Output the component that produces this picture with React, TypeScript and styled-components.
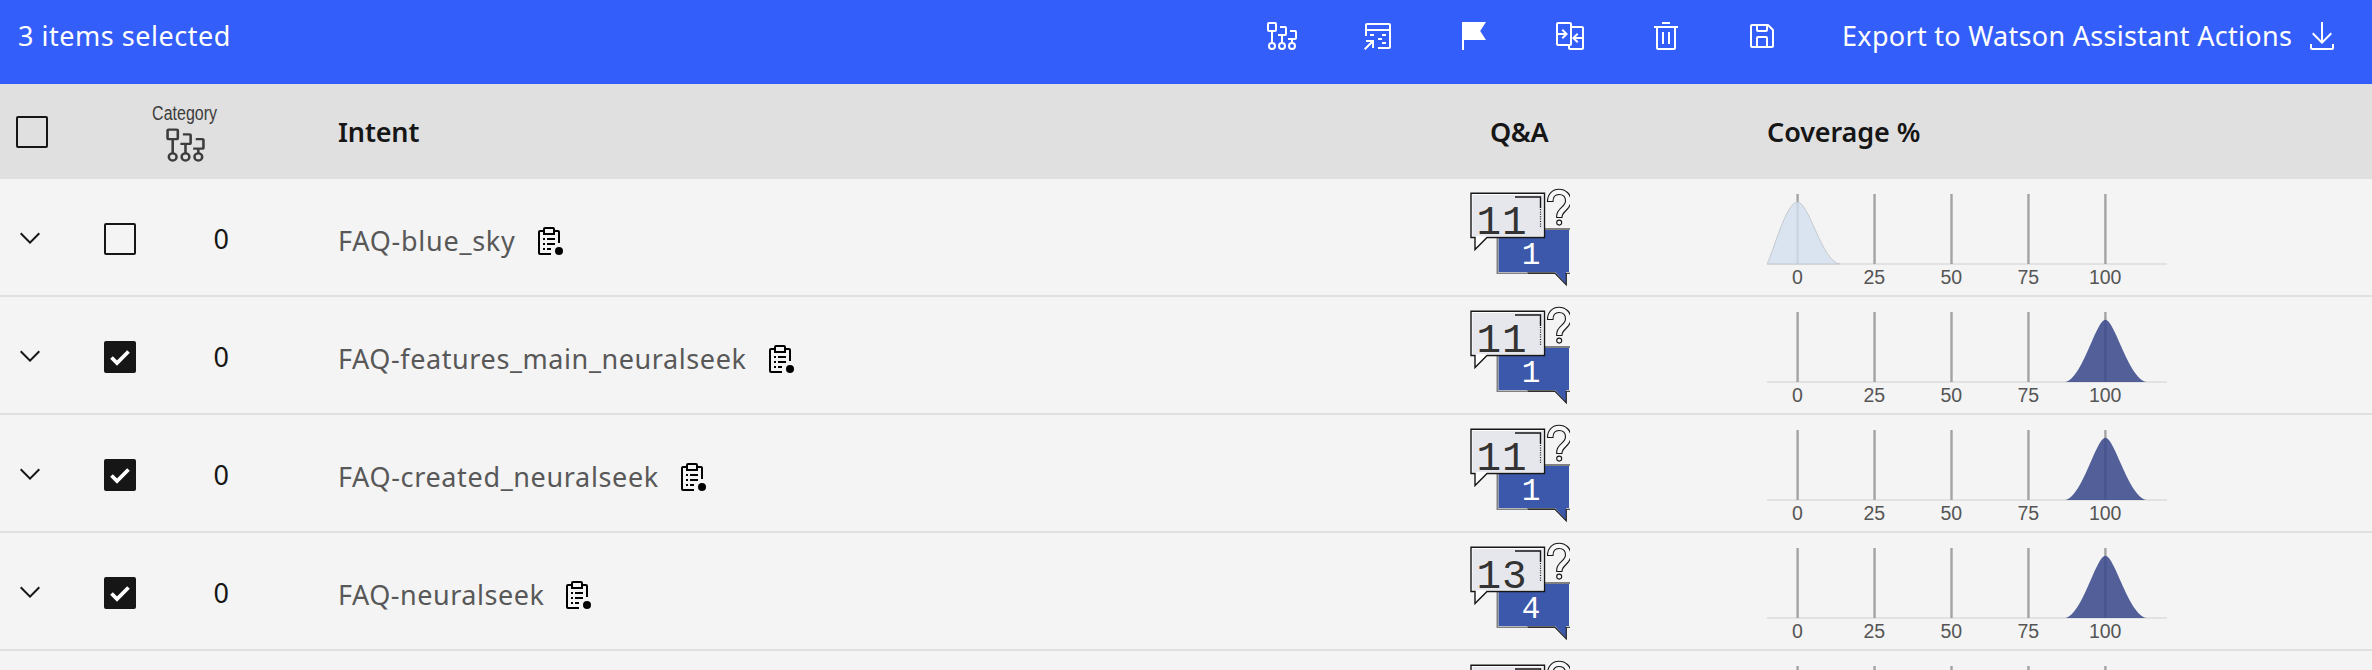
import React from 'react';
import styled, { createGlobalStyle } from 'styled-components';

const Global = createGlobalStyle`
  *{box-sizing:border-box}
  body{margin:0;background:#f4f4f4;overflow:hidden}
`;

const Page = styled.div`
  width:2372px;height:670px;overflow:hidden;background:#f4f4f4;color:#161616;
  font:400 28px/36px "Noto Sans",sans-serif;
`;
const Toolbar = styled.header`
  height:84px;padding:20px 34px 0 18px;display:flex;align-items:flex-start;background:#345efa;color:#fff;
`;
const Label = styled.span<{ $spacing?: number }>`
  white-space:nowrap;line-height:32px;font-size:27px;letter-spacing:${p => p.$spacing ?? 0}px;
`;
const Actions = styled.div`
  display:flex;gap:64px;margin-left:auto;margin-right:64px;
`;
const ExportAction = styled.div`
  width:496px;display:flex;justify-content:space-between;
`;
const Icon = styled.svg`
  width:32px;height:32px;flex:none;display:block;fill:currentColor;
`;
const Lines = styled.g`
  fill:none;stroke:currentColor;stroke-width:2;
`;
const columns = '104px 234px 1132px 297px 1fr';
const HeaderRow = styled.div`
  display:grid;grid-template-columns:${columns};height:95px;align-items:center;background:#e0e0e0;
`;
const Row = styled.div`
  display:grid;grid-template-columns:${columns};height:118px;border-bottom:2px solid #e0e0e0;
`;
const CheckBox = styled.div<{ $on?: boolean }>`
  width:32px;height:32px;flex:none;border:2px solid #161616;border-radius:2px;
  background:${p => (p.$on ? '#161616' : 'transparent')};
`;
const HeadCheck = styled(CheckBox)`
  margin:1px 0 0 16px;
`;
const CheckMark = styled.svg`
  width:28px;height:28px;display:block;fill:none;stroke:#fff;stroke-width:3.8;
`;
const HeadText = styled.div<{ $spacing?: number }>`
  font-weight:600;font-size:27px;letter-spacing:${p => p.$spacing ?? 0}px;white-space:nowrap;
`;
const QaHead = styled(HeadText)`
  padding-left:20px;
`;
const Category = styled.div`
  width:64px;margin-left:49px;padding-top:18px;align-self:start;
  display:flex;flex-direction:column;align-items:center;color:#3c3c3c;
`;
const CategoryText = styled.div`
  font:20px/22px "Liberation Sans",sans-serif;transform:scaleX(.8);
`;
const CategoryIcon = styled.svg`
  width:41px;height:38px;margin-top:2px;display:block;
`;
const Chevron = styled.svg`
  width:32px;height:32px;margin:43px 0 0 14px;fill:#161616;
`;
const SelectCell = styled.div`
  display:flex;align-items:flex-start;padding-top:44px;
`;
const Count = styled.span`
  margin-left:77.5px;line-height:32px;font-size:27px;
`;
const IntentCell = styled.div`
  display:flex;align-items:flex-start;padding-top:46px;gap:17px;color:#585858;
`;
const ClipSvg = styled(Icon)`
  color:#000;
`;
const Bubble = styled.svg`
  width:100px;height:116px;display:block;
`;
const BubbleText = styled.text`
  font-family:"Liberation Mono",monospace;
`;
const Chart = styled.svg`
  width:402px;height:116px;display:block;
`;
const TickText = styled.text`
  font:19.5px "Liberation Sans",sans-serif;fill:#555;text-anchor:middle;
`;

const TreeLines = () => (
  <Lines>
    <rect x="2" y="3" width="8" height="8" rx="1" />
    <path d="M6 11v12M14 7h5a1 1 0 0 1 1 1v6a1 1 0 0 1-1 1h-7M16 15v8M24 11h5a1 1 0 0 1 1 1v6a1 1 0 0 1-1 1h-7M26 19v4" />
    <circle cx="6" cy="26" r="3" />
    <circle cx="16" cy="26" r="3" />
    <circle cx="26" cy="26" r="3" />
  </Lines>
);

const ClipIcon = () => (
  <ClipSvg viewBox="0 0 32 32">
    <path d="M10 13h2v2h-2zM14 13h8v2h-8zM10 18h2v2h-2zM14 18h8v2h-8zM10 23h2v2h-2zM14 23h4v2h-4z" />
    <path d="M18 30H7a2 2 0 0 1-2-2V7a2 2 0 0 1 2-2h3V4a2 2 0 0 1 2-2h8a2 2 0 0 1 2 2v1h3a2 2 0 0 1 2 2v11h-2V7h-3v3H10V7H7v21h11zM12 4v4h8V4z" />
    <circle cx="26" cy="26" r="4" />
  </ClipSvg>
);

const QaBubble = ({ q, a }: { q?: number; a?: number }) => (
  <Bubble viewBox="0 0 100 116">
    <path d="M28.5 51H99V93H96V105L85 93H28.5Z" fill="#3c58ab" />
    <path d="M74 50H100M27.4 58V94H85" fill="none" stroke="#808080" strokeWidth="1.8" />
    <path d="M28 93.5H57" stroke="#b8b8c0" strokeWidth="1" />
    <path d="M58 94.3H85L96.3 106V94.3H100" fill="none" stroke="#161616" strokeWidth="1.1" />
    <path d="M1 14.3H74.5V58.5H17L5 70.5V58.5H1Z" fill="#fff" stroke="#161616" strokeWidth="1.4" />
    <path d="M2.5 16H73V57H2.5Z" fill="#e6e7ed" />
    <path d="M45 18H70.5V29" fill="none" stroke="#161616" strokeWidth="1.4" />
    <path d="M70.5 30V49" stroke="#161616" strokeWidth="1.2" strokeDasharray="1 1.4" />
    <path d="M77.5 22.5C77.5 15 82.5 10.3 89 10.3S101 15 101 22C101 31 92 32 92 38V38.5H86.7V37C86.7 29 95.5 28 95.5 22C95.5 18 93 15.5 89 15.5S83 18 83 22.5Z" fill="#f8f8f8" stroke="#161616" strokeWidth="1.1" />
    <circle cx="89.2" cy="43.6" r="2.5" fill="#f8f8f8" stroke="#161616" strokeWidth="1.1" />
    {q !== undefined && <BubbleText x="6.5" y="55" fontSize="41" letterSpacing="1" fill="#333">{q}</BubbleText>}
    {a !== undefined && <BubbleText x="61" y="84.5" textAnchor="middle" fontSize="31" fill="#fff">{a}</BubbleText>}
  </Bubble>
);

const ticks = [0, 25, 50, 75, 100];
const Coverage = ({ full, labels = true }: { full: boolean; labels?: boolean }) => (
  <Chart viewBox="-1 0 402 116">
    <path d="M-1 85H399" stroke="#dcdcdc" strokeWidth="1.6" />
    {ticks.map((t, i) => (
      <g key={t}>
        <path d={`M${29.6 + i * 76.95} 15V85`} stroke="#a3a3a3" strokeWidth="2.4" />
        {labels && <TickText x={29.4 + i * 76.95} y="105">{t}</TickText>}
      </g>
    ))}
    {full
      ? <path d="M297 85C314 83 328 22.7 337.4 22.7S361 83 379 85Z" fill="#3b4a8c" fillOpacity=".88" />
      : <path d="M-1 85C5 74 18 23 29.5 23C41 23 54 83 72 85Z" fill="#d3e0ef" fillOpacity=".82" stroke="#c4c9ce" strokeWidth="1" />}
  </Chart>
);

const rows = [
  { name: 'FAQ-blue_sky', on: false, q: 11, a: 1, spacing: 0.75 },
  { name: 'FAQ-features_main_neuralseek', on: true, q: 11, a: 1, spacing: 0.59 },
  { name: 'FAQ-created_neuralseek', on: true, q: 11, a: 1, spacing: 0.65 },
  { name: 'FAQ-neuralseek', on: true, q: 13, a: 4, spacing: 0.52 },
];

export default function App() {
  return (
    <Page>
      <Global />
      <Toolbar>
        <Label $spacing={0.52}>3 items selected</Label>
        <Actions>
          <Icon viewBox="0 0 32 32"><TreeLines /></Icon>
          <Icon viewBox="0 0 32 32">
            <Lines><path d="M4 16V5a1 1 0 0 1 1-1h22a1 1 0 0 1 1 1v22a1 1 0 0 1-1 1H16M4 10h24" /></Lines>
            <path d="M4 20v2h4.59L2 28.59 3.41 30 10 23.41V28h2v-8zM8 14h4v2H8zM20 14h4v2h-4zM16 18h4v2h-4zM20 22h4v2h-4z" />
          </Icon>
          <Icon viewBox="0 0 32 32"><path d="M6 30H4V2h24l-5.8 9L28 20H6z" /></Icon>
          <Icon viewBox="0 0 32 32"><path d="M28 6H18V4a2 2 0 0 0-2-2H4a2 2 0 0 0-2 2v20a2 2 0 0 0 2 2h10v2a2 2 0 0 0 2 2h12a2 2 0 0 0 2-2V8a2 2 0 0 0-2-2ZM4 15h6.17l-2.58 2.59L9 19l5-5-5-5-1.41 1.41L10.17 13H4V4h12v20H4Zm12 13v-2a2 2 0 0 0 2-2V8h10v9h-6.17l2.58-2.59L23 13l-5 5 5 5 1.41-1.41L21.83 19H28v9Z" /></Icon>
          <Icon viewBox="0 0 32 32"><path d="M12 12h2v12h-2zM18 12h2v12h-2zM4 6v2h2v20a2 2 0 0 0 2 2h16a2 2 0 0 0 2-2V8h2V6Zm4 22V8h16v20ZM12 2h8v2h-8z" /></Icon>
          <Icon viewBox="0 0 32 32"><path d="M27.71 9.29l-5-5A1 1 0 0 0 22 4H6a2 2 0 0 0-2 2v20a2 2 0 0 0 2 2h20a2 2 0 0 0 2-2V10a1 1 0 0 0-.29-.71ZM12 6h8v4h-8Zm8 20h-8v-8h8Zm2 0v-8a2 2 0 0 0-2-2h-8a2 2 0 0 0-2 2v8H6V6h4v4a2 2 0 0 0 2 2h8a2 2 0 0 0 2-2V6.41l4 4V26Z" /></Icon>
        </Actions>
        <ExportAction>
          <Label $spacing={0.3}>Export to Watson Assistant Actions</Label>
          <Icon viewBox="0 0 32 32"><path d="M26 24v4H6v-4H4v4a2 2 0 0 0 2 2h20a2 2 0 0 0 2-2v-4zM26 14l-1.41-1.41L17 20.17V2h-2v18.17l-7.59-7.58L6 14l10 10z" /></Icon>
        </ExportAction>
      </Toolbar>
      <HeaderRow>
        <HeadCheck />
        <Category>
          <CategoryText>Category</CategoryText>
          <CategoryIcon viewBox="0 0 32 32" preserveAspectRatio="none"><TreeLines /></CategoryIcon>
        </Category>
        <HeadText $spacing={-0.15}>Intent</HeadText>
        <QaHead $spacing={-0.4}>Q&amp;A</QaHead>
        <HeadText $spacing={-0.1}>Coverage %</HeadText>
      </HeaderRow>
      {rows.map(r => (
        <Row key={r.name}>
          <Chevron viewBox="0 0 32 32"><path d="M16 22L6 12l1.4-1.4L16 19.2l8.6-8.6L26 12z" /></Chevron>
          <SelectCell>
            <CheckBox $on={r.on}>
              {r.on && <CheckMark viewBox="2 2 28 28"><path d="M7.5 16.5L13 22L24.5 10.5" /></CheckMark>}
            </CheckBox>
            <Count>0</Count>
          </SelectCell>
          <IntentCell>
            <Label $spacing={r.spacing}>{r.name}</Label>
            <ClipIcon />
          </IntentCell>
          <QaBubble q={r.q} a={r.a} />
          <Coverage full={r.on} />
        </Row>
      ))}
      <Row>
        <span /><span /><span />
        <QaBubble />
        <Coverage full labels={false} />
      </Row>
    </Page>
  );
}
